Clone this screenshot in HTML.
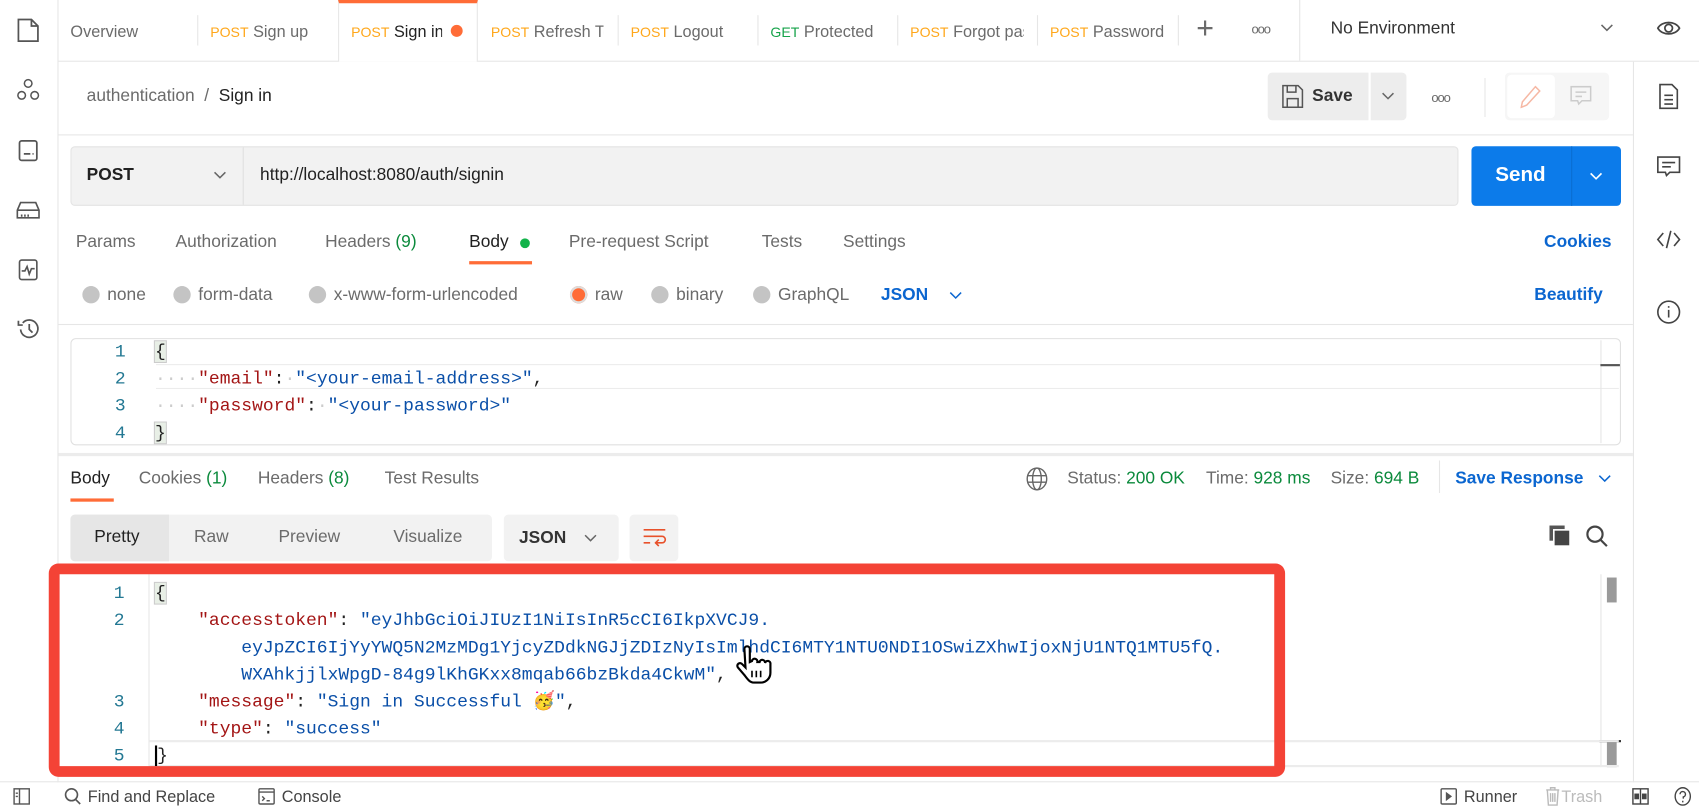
<!DOCTYPE html>
<html><head><meta charset="utf-8"><style>
*{margin:0;padding:0;box-sizing:border-box}
html,body{width:1699px;height:811px;overflow:hidden;background:#fff}
#w{position:absolute;left:0;top:0;width:1568px;height:749px;transform:scale(1.08355);transform-origin:0 0;font-family:"Liberation Sans",sans-serif;color:#212121;font-size:15px}
.a{position:absolute;white-space:nowrap}
.g{color:#6b6b6b}
.post{color:#ffa71a;font-size:13px}
.get{color:#16a34a;font-size:13px}
.mono{font-family:"Liberation Mono",monospace;font-size:16.6px}
.k{color:#a31515}.s{color:#0a4fa8}.n{color:#237893}
.rad{display:inline-block;width:16px;height:16px;border-radius:50%;background:#c4c4c4;vertical-align:-3px;margin-right:7px}
svg{position:absolute}
.t{top:2px}
</style></head><body><div id="w">
<div class="a" style="left:0;top:0;width:54px;height:722px;border-right:1px solid #e6e6e6"></div>
<svg style="left:15px;top:16px" width="22" height="24" viewBox="0 0 22 24" fill="none" stroke="#555" stroke-width="1.6"><path d="M2 2h12l6 6v14H2z M14 2v6h6"/></svg>
<svg style="left:15px;top:72px" width="22" height="22" viewBox="0 0 22 22" fill="none" stroke="#555" stroke-width="1.4"><circle cx="11" cy="5" r="3.5"/><circle cx="5" cy="16" r="3.5"/><circle cx="17" cy="16" r="3.5"/></svg>
<svg style="left:16px;top:128px" width="20" height="22" viewBox="0 0 20 22" fill="none" stroke="#555" stroke-width="1.6"><rect x="2" y="2" width="16" height="18" rx="2"/><path d="M6 14h6M14 14h1"/></svg>
<svg style="left:14px;top:185px" width="24" height="18" viewBox="0 0 24 18" fill="none" stroke="#555" stroke-width="1.5"><path d="M5 2h14l3 7v7H2V9z M2 9h20 M6 13v2M9 13v2M12 13v2"/></svg>
<svg style="left:16px;top:238px" width="20" height="22" viewBox="0 0 20 22" fill="none" stroke="#555" stroke-width="1.5"><rect x="2" y="2" width="16" height="18" rx="2"/><path d="M4 12h3l2-4 2 7 2-5h3"/></svg>
<svg style="left:14px;top:293px" width="24" height="22" viewBox="0 0 24 22" fill="none" stroke="#555" stroke-width="1.6"><path d="M5 11a8 8 0 1 0 2-6 M3 3v4h4 M13 6v5l3 3"/></svg>
<div class="a" style="left:54px;top:56px;width:1514px;height:1px;background:#e6e6e6"></div>
<div class="a g" style="left:65px;top:21px">Overview</div>
<div class="a" style="left:182px;top:14px;width:1px;height:28px;background:#e6e6e6"></div>
<div class="a" style="left:194px;top:21px"><span class="post">POST</span> <span class="g">Sign up</span></div>
<div class="a" style="left:312px;top:0;width:129px;height:57px;background:#fff;border-left:1px solid #e6e6e6;border-right:1px solid #e6e6e6;border-top:3px solid #ff6c37"></div>
<div class="a" style="left:324px;top:21px;width:84px;overflow:hidden"><span class="post">POST</span> Sign in</div>
<div class="a" style="left:416px;top:23px;width:11px;height:11px;border-radius:50%;background:#ff6c37"></div>
<div class="a" style="left:453px;top:21px;width:104px;overflow:hidden"><span class="post">POST</span> <span class="g">Refresh Token</span></div>
<div class="a" style="left:570px;top:14px;width:1px;height:28px;background:#e6e6e6"></div>
<div class="a" style="left:582px;top:21px"><span class="post">POST</span> <span class="g">Logout</span></div>
<div class="a" style="left:699px;top:14px;width:1px;height:28px;background:#e6e6e6"></div>
<div class="a" style="left:711px;top:21px;width:100px;overflow:hidden"><span class="get">GET</span> <span class="g">Protected</span></div>
<div class="a" style="left:828px;top:14px;width:1px;height:28px;background:#e6e6e6"></div>
<div class="a" style="left:840px;top:21px;width:105px;overflow:hidden"><span class="post">POST</span> <span class="g">Forgot password</span></div>
<div class="a" style="left:957px;top:14px;width:1px;height:28px;background:#e6e6e6"></div>
<div class="a" style="left:969px;top:21px;width:108px;overflow:hidden"><span class="post">POST</span> <span class="g">Password reset</span></div>
<div class="a" style="left:1087px;top:14px;width:1px;height:28px;background:#e6e6e6"></div>
<div class="a g" style="left:1104px;top:10px;font-size:28px;font-weight:300">+</div>
<div class="a g" style="left:1155px;top:20px;font-size:12px;letter-spacing:-1px">ooo</div>
<div class="a" style="left:1199px;top:0;width:1px;height:56px;background:#e6e6e6"></div>
<div class="a" style="left:1228px;top:18px;color:#333;font-size:16px">No Environment</div>
<svg style="left:1477px;top:22px" width="12" height="8" viewBox="0 0 12 8" fill="none" stroke="#666" stroke-width="1.4"><path d="M1 1l5 5 5-5"/></svg>
<svg style="left:1529px;top:16px" width="22" height="20" viewBox="0 0 22 20" fill="none" stroke="#444" stroke-width="1.6"><path d="M1 10C5 3 17 3 21 10C17 17 5 17 1 10z"/><circle cx="11" cy="10" r="3.5"/></svg>
<div class="a" style="left:1507px;top:57px;width:1px;height:665px;background:#e6e6e6"></div>
<svg style="left:1531px;top:77px" width="18" height="24" viewBox="0 0 18 24" fill="none" stroke="#444" stroke-width="1.5"><path d="M1 1h11l5 5v17H1z M5 11h8M5 15h8M5 19h8"/></svg>
<svg style="left:1529px;top:143px" width="22" height="22" viewBox="0 0 22 22" fill="none" stroke="#444" stroke-width="1.5"><path d="M1 2h20v14H12l-3 3-1-3H1z M5 7h12M5 11h8"/></svg>
<svg style="left:1528px;top:211px" width="24" height="20" viewBox="0 0 24 20" fill="none" stroke="#444" stroke-width="1.5"><path d="M7 4l-5 6 5 6M17 4l5 6-5 6M14 2l-4 16"/></svg>
<svg style="left:1529px;top:277px" width="22" height="22" viewBox="0 0 22 22" fill="none" stroke="#444" stroke-width="1.5"><circle cx="11" cy="11" r="10"/><path d="M11 9v7M11 5.5v1.5"/></svg>
<div class="a" style="left:80px;top:80px;font-size:16px"><span class="g">authentication</span> <span class="g">&nbsp;/&nbsp;</span> <span style="color:#212121">Sign in</span></div>
<div class="a" style="left:1170px;top:67px;width:93px;height:44px;background:#ededed;border-radius:4px 0 0 4px"></div>
<svg style="left:1183px;top:78px" width="20" height="22" viewBox="0 0 20 22" fill="none" stroke="#555" stroke-width="1.4"><path d="M1 1h14l4 4v16H1z M5 1v6h8V1 M5 21v-8h10v8"/></svg>
<div class="a" style="left:1211px;top:80px;font-size:16px;font-weight:bold;color:#333">Save</div>
<div class="a" style="left:1265px;top:67px;width:33px;height:44px;background:#ededed;border-radius:0 4px 4px 0"></div>
<svg style="left:1275px;top:85px" width="12" height="8" viewBox="0 0 12 8" fill="none" stroke="#666" stroke-width="1.4"><path d="M1 1l5 5 5-5"/></svg>
<div class="a g" style="left:1321px;top:83px;font-size:12px;letter-spacing:-1px">ooo</div>
<div class="a" style="left:1370px;top:72px;width:1px;height:36px;background:#e6e6e6"></div>
<div class="a" style="left:1389px;top:67px;width:96px;height:44px;background:#f6f6f6;border-radius:4px"></div>
<div class="a" style="left:1391px;top:69px;width:44px;height:40px;background:#fff;border-radius:4px"></div>
<svg style="left:1403px;top:78px" width="20" height="22" viewBox="0 0 20 22" fill="none" stroke="#f6b8a4" stroke-width="1.4"><path d="M14 2l4 4L6 19l-5 2 1-5z"/></svg>
<svg style="left:1449px;top:79px" width="20" height="20" viewBox="0 0 20 20" fill="none" stroke="#ccc" stroke-width="1.4"><path d="M1 1h18v13h-8l-3 3-1-3H1z M5 6h10M5 10h6"/></svg>
<div class="a" style="left:54px;top:124px;width:1453px;height:1px;background:#e6e6e6"></div>
<div class="a" style="left:65px;top:135px;width:1281px;height:55px;background:#f2f2f2;border:1px solid #e4e4e4;border-radius:4px"></div>
<div class="a" style="left:80px;top:153px;font-size:16px;font-weight:bold;color:#212121">POST</div>
<svg style="left:197px;top:158px" width="12" height="8" viewBox="0 0 12 8" fill="none" stroke="#666" stroke-width="1.4"><path d="M1 1l5 5 5-5"/></svg>
<div class="a" style="left:224px;top:136px;width:1px;height:53px;background:#e0e0e0"></div>
<div class="a" style="left:240px;top:153px;font-size:16px;color:#212121">http://localhost:8080/auth/signin</div>
<div class="a" style="left:1358px;top:135px;width:138px;height:55px;background:#0c7bea;border-radius:4px"></div>
<div class="a" style="left:1450px;top:135px;width:1px;height:55px;background:#0a6dd0"></div>
<div class="a" style="left:1380px;top:151px;font-size:19px;font-weight:bold;color:#fff">Send</div>
<svg style="left:1467px;top:159px" width="12" height="8" viewBox="0 0 12 8" fill="none" stroke="#fff" stroke-width="1.5"><path d="M1 1l5 5 5-5"/></svg>
<div class="a g" style="left:70px;top:215px;font-size:16px">Params</div>
<div class="a g" style="left:162px;top:215px;font-size:16px">Authorization</div>
<div class="a g" style="left:300px;top:215px;font-size:16px">Headers <span style="color:#0b8a3c">(9)</span></div>
<div class="a" style="left:433px;top:215px;font-size:16px;color:#212121">Body</div>
<div class="a" style="left:480px;top:220px;width:9px;height:9px;border-radius:50%;background:#12b34a"></div>
<div class="a" style="left:433px;top:241px;width:58px;height:3px;background:#ff6c37"></div>
<div class="a g" style="left:525px;top:215px;font-size:16px">Pre-request Script</div>
<div class="a g" style="left:703px;top:215px;font-size:16px">Tests</div>
<div class="a g" style="left:778px;top:215px;font-size:16px">Settings</div>
<div class="a" style="left:1425px;top:215px;font-size:16px;font-weight:bold;color:#0b66d0">Cookies</div>
<div class="a g" style="left:76px;top:264px;font-size:16px"><span class="rad"></span>none</div>
<div class="a g" style="left:160px;top:264px;font-size:16px"><span class="rad"></span>form-data</div>
<div class="a g" style="left:285px;top:264px;font-size:16px"><span class="rad"></span>x-www-form-urlencoded</div>
<div class="a g" style="left:526px;top:264px;font-size:16px"><span class="rad" style="background:#ff6c37;box-shadow:0 0 0 2px #ddd inset"></span>raw</div>
<div class="a g" style="left:601px;top:264px;font-size:16px"><span class="rad"></span>binary</div>
<div class="a g" style="left:695px;top:264px;font-size:16px"><span class="rad"></span>GraphQL</div>
<div class="a" style="left:813px;top:264px;font-size:16px;font-weight:bold;color:#0b66d0">JSON</div>
<svg style="left:876px;top:269px" width="12" height="8" viewBox="0 0 12 8" fill="none" stroke="#0b66d0" stroke-width="1.4"><path d="M1 1l5 5 5-5"/></svg>
<div class="a" style="left:1416px;top:264px;font-size:16px;font-weight:bold;color:#0b66d0">Beautify</div>
<div class="a" style="left:54px;top:299px;width:1453px;height:1px;background:#e6e6e6"></div>
<div class="a" style="left:65px;top:312px;width:1431px;height:99px;border:1px solid #e0e0e0;border-radius:5px"></div>
<div class="a" style="left:144px;top:336px;width:1350px;height:23px;border:1px solid #ececec;border-left:none;border-right:none"></div>
<div class="a" style="left:1477px;top:314px;width:1px;height:95px;background:#e6e6e6"></div>
<div class="a" style="left:1477px;top:336px;width:18px;height:2px;background:#555"></div>
<div class="a mono" style="left:76px;top:312px;line-height:25px">
<div class="n" style="position:absolute;left:0;width:40px;text-align:right;top:0">1<br>2<br>3<br>4</div>
<div style="position:absolute;left:67px;top:0"><span style="background:#e8efe6;outline:1px solid #ccc">{</span><br><span style="color:#ccc">····</span><span class="k">"email"</span>:<span style="color:#ccc">·</span><span class="s">"&lt;your-email-address&gt;"</span>,<br><span style="color:#ccc">····</span><span class="k">"password"</span>:<span style="color:#ccc">·</span><span class="s">"&lt;your-password&gt;"</span><br><span style="background:#e8efe6;outline:1px solid #ccc">}</span></div>
</div>
<div class="a" style="left:54px;top:418px;width:1453px;height:3px;background:#ececec"></div>
<div class="a" style="left:65px;top:433px;font-size:16px;color:#212121">Body</div>
<div class="a" style="left:65px;top:460px;width:40px;height:3px;background:#ff6c37"></div>
<div class="a g" style="left:128px;top:433px;font-size:16px">Cookies <span style="color:#0b8a3c">(1)</span></div>
<div class="a g" style="left:238px;top:433px;font-size:16px">Headers <span style="color:#0b8a3c">(8)</span></div>
<div class="a g" style="left:355px;top:433px;font-size:16px">Test Results</div>
<svg style="left:947px;top:431px" width="20" height="22" viewBox="0 0 20 22" fill="none" stroke="#666" stroke-width="1.3"><ellipse cx="10" cy="11" rx="9" ry="10"/><ellipse cx="10" cy="11" rx="4" ry="10"/><path d="M1 8h18M1 14h18"/></svg>
<div class="a g" style="left:985px;top:433px;font-size:16px">Status: <span style="color:#0b8a3c">200 OK</span></div>
<div class="a g" style="left:1113px;top:433px;font-size:16px">Time: <span style="color:#0b8a3c">928 ms</span></div>
<div class="a g" style="left:1228px;top:433px;font-size:16px">Size: <span style="color:#0b8a3c">694 B</span></div>
<div class="a" style="left:1328px;top:425px;width:1px;height:30px;background:#e6e6e6"></div>
<div class="a" style="left:1343px;top:433px;font-size:16px;font-weight:bold;color:#0b66d0">Save Response</div>
<svg style="left:1475px;top:438px" width="12" height="8" viewBox="0 0 12 8" fill="none" stroke="#0b66d0" stroke-width="1.4"><path d="M1 1l5 5 5-5"/></svg>
<div class="a" style="left:65px;top:475px;width:389px;height:43px;background:#f2f2f2;border-radius:4px"></div>
<div class="a" style="left:65px;top:475px;width:91px;height:43px;background:#e6e6e6;border-radius:4px 0 0 4px"></div>
<div class="a" style="left:87px;top:487px;font-size:16px;color:#212121">Pretty</div>
<div class="a g" style="left:179px;top:487px;font-size:16px">Raw</div>
<div class="a g" style="left:257px;top:487px;font-size:16px">Preview</div>
<div class="a g" style="left:363px;top:487px;font-size:16px">Visualize</div>
<div class="a" style="left:465px;top:475px;width:106px;height:43px;background:#f2f2f2;border-radius:4px"></div>
<div class="a" style="left:479px;top:488px;font-size:16px;font-weight:bold;color:#333">JSON</div>
<svg style="left:539px;top:493px" width="12" height="8" viewBox="0 0 12 8" fill="none" stroke="#666" stroke-width="1.4"><path d="M1 1l5 5 5-5"/></svg>
<div class="a" style="left:581px;top:475px;width:45px;height:43px;background:#f2f2f2;border-radius:4px"></div>
<svg style="left:593px;top:486px" width="22" height="20" viewBox="0 0 22 20" fill="none" stroke="#e8512b" stroke-width="1.5"><path d="M1 3h20M1 9h17a3 3 0 0 1 0 6h-6M15 12l-3 3 3 3M1 15h6"/></svg>
<svg style="left:1429px;top:484px" width="22" height="22" viewBox="0 0 22 22"><rect x="1" y="1" width="14" height="14" fill="#555"/><rect x="5" y="5" width="15" height="15" fill="#444" stroke="#fff" stroke-width="1.5"/></svg>
<svg style="left:1463px;top:484px" width="22" height="22" viewBox="0 0 22 22" fill="none" stroke="#444" stroke-width="2"><circle cx="9" cy="9" r="7"/><path d="M14 14l6 6"/></svg>
<div class="a" style="left:1477px;top:530px;width:1px;height:178px;background:#e6e6e6"></div>
<div class="a" style="left:1483px;top:533px;width:9px;height:23px;background:#9a9a9a"></div>
<div class="a" style="left:1483px;top:684px;width:9px;height:24px;background:#9a9a9a"></div>
<div class="a" style="left:1476px;top:683px;width:20px;height:2px;background:#333"></div>
<div class="a" style="left:138px;top:683px;width:1356px;height:25px;border-top:2px solid #ececec;border-bottom:2px solid #ececec"></div>
<div class="a mono" style="left:55px;top:535px;line-height:25px">
<div class="n" style="position:absolute;left:0;width:60px;text-align:right;top:0">1<br>2<br><br><br>3<br>4<br>5</div>
<div style="position:absolute;left:88px;top:0"><span style="background:#e8efe6;outline:1px solid #ccc">{</span><br>&nbsp;&nbsp;&nbsp;&nbsp;<span class="k">"accesstoken"</span>: <span class="s">"eyJhbGciOiJIUzI1NiIsInR5cCI6IkpXVCJ9.</span><br>&nbsp;&nbsp;&nbsp;&nbsp;&nbsp;&nbsp;&nbsp;&nbsp;<span class="s">eyJpZCI6IjYyYWQ5N2MzMDg1YjcyZDdkNGJjZDIzNyIsImlhdCI6MTY1NTU0NDI1OSwiZXhwIjoxNjU1NTQ1MTU5fQ.</span><br>&nbsp;&nbsp;&nbsp;&nbsp;&nbsp;&nbsp;&nbsp;&nbsp;<span class="s">WXAhkjjlxWpgD-84g9lKhGKxx8mqab66bzBkda4CkwM"</span>,<br>&nbsp;&nbsp;&nbsp;&nbsp;<span class="k">"message"</span>: <span class="s">"Sign in Successful 🥳"</span>,<br>&nbsp;&nbsp;&nbsp;&nbsp;<span class="k">"type"</span>: <span class="s">"success"</span><br><span style="border-left:2px solid #000">}</span></div>
</div>
<div class="a" style="left:137px;top:530px;width:1px;height:178px;background:#e6e6e6"></div>
<svg style="left:677px;top:595px" width="36" height="36" viewBox="0 0 36 36"><path d="M10 4a2.5 2.5 0 0 1 5 0v12l2-1a2.5 2.5 0 0 1 5 1l2 0a2.5 2.5 0 0 1 5 1a2.5 2.5 0 0 1 5 1v8c0 5-4 9-9 9h-6c-4 0-6-3-9-7l-6-7a2.5 2.5 0 0 1 4-3l3 3z" fill="#fff" stroke="#000" stroke-width="2"/><path d="M17 24v6M21 24v6M25 24v6" stroke="#000" stroke-width="1.5"/></svg>
<div class="a" style="left:45px;top:520px;width:1141px;height:197px;border:10px solid #f44336;border-radius:9px"></div>
<div class="a" style="left:0;top:721px;width:1568px;height:1px;background:#e6e6e6"></div>
<svg style="left:12px;top:727px" width="16" height="16" viewBox="0 0 16 16" fill="none" stroke="#555" stroke-width="1.3"><rect x="1" y="1" width="14" height="14"/><path d="M6 1v14M2.5 5h2M2.5 8h2"/></svg>
<svg style="left:59px;top:727px" width="16" height="16" viewBox="0 0 16 16" fill="none" stroke="#555" stroke-width="1.5"><circle cx="7" cy="6.5" r="5.5"/><path d="M11 11l4 4"/></svg>
<div class="a g" style="left:81px;top:727px;color:#444">Find and Replace</div>
<svg style="left:238px;top:727px" width="16" height="16" viewBox="0 0 16 16" fill="none" stroke="#555" stroke-width="1.3"><rect x="1" y="1" width="14" height="14" rx="1"/><path d="M1 4h14M4 8l2 2-2 2M8 12h3"/></svg>
<div class="a g" style="left:260px;top:727px;color:#444">Console</div>
<svg style="left:1329px;top:727px" width="16" height="16" viewBox="0 0 16 16" fill="none" stroke="#555" stroke-width="1.3"><rect x="1" y="1" width="14" height="14" rx="1"/><path d="M6 5l4 3-4 3z" fill="#555"/></svg>
<div class="a g" style="left:1351px;top:727px;color:#444">Runner</div>
<svg style="left:1426px;top:726px" width="14" height="18" viewBox="0 0 14 18" fill="none" stroke="#bbb" stroke-width="1.3"><path d="M1 3h12M5 3V1h4v2M2 3l1 14h8l1-14M5 6v8M7 6v8M9 6v8"/></svg>
<div class="a" style="left:1441px;top:727px;color:#bbb">Trash</div>
<svg style="left:1506px;top:727px" width="16" height="16" viewBox="0 0 16 16" fill="none" stroke="#444" stroke-width="1.3"><rect x="1" y="1" width="14" height="14"/><path d="M8 1v14"/><rect x="3" y="6" width="3" height="4" fill="#444"/><rect x="10" y="6" width="3" height="4" fill="#444"/></svg>
<svg style="left:1545px;top:726px" width="16" height="18" viewBox="0 0 16 18" fill="none" stroke="#444" stroke-width="1.3"><ellipse cx="8" cy="9" rx="7" ry="8"/><path d="M5.5 7a2.5 2.5 0 1 1 3 2.5V11M8 13v1.5"/></svg>
</div></body></html>
